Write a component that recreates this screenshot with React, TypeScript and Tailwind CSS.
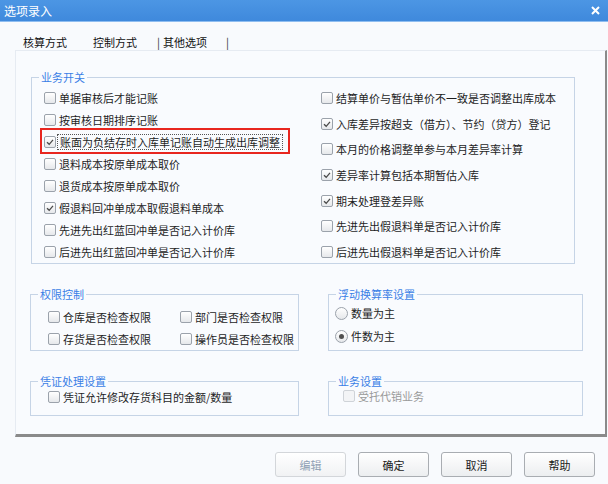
import React from 'react';

const leftItems: [string, boolean][] = [
    ['单据审核后才能记账', false],
    ['按审核日期排序记账', false],
    ['账面为负结存时入库单记账自动生成出库调整', true],
    ['退料成本按原单成本取价', false],
    ['退货成本按原单成本取价', false],
    ['假退料回冲单成本取假退料单成本', true],
    ['先进先出红蓝回冲单是否记入计价库', false],
    ['后进先出红蓝回冲单是否记入计价库', false],
];

const rightItems: [string, boolean][] = [
    ['结算单价与暂估单价不一致是否调整出库成本', false],
    ['入库差异按超支（借方）、节约（贷方）登记', true],
    ['本月的价格调整单参与本月差异率计算', false],
    ['差异率计算包括本期暂估入库', true],
    ['期末处理登差异账', true],
    ['先进先出假退料单是否记入计价库', false],
    ['后进先出假退料单是否记入计价库', false],
];

const Box = ({ checked = false, disabled = false }: { checked?: boolean; disabled?: boolean }) => (
    <span
        className={
            disabled
                ? 'w-[12px] h-[12px] shrink-0 rounded-[2px] border border-[#cfd3d8] bg-[#f3f4f6]'
                : 'w-[12px] h-[12px] shrink-0 rounded-[2px] border border-[#9ba2ab] bg-gradient-to-b from-white to-[#e6e8eb] flex items-center justify-center'
        }
    >
        {checked && (
            <svg width="10" height="10" viewBox="0 0 10 10">
                <path d="M2 5.2 L4.2 7.3 L8 2.8" fill="none" stroke="#4a4a4a" strokeWidth="1.3" />
            </svg>
        )}
    </span>
);

const Radio = ({ on = false }: { on?: boolean }) => (
    <span className="w-[13px] h-[13px] shrink-0 rounded-full border border-[#9ba2ab] bg-gradient-to-b from-white to-[#e6e8eb] flex items-center justify-center">
        {on && <span className="w-[5px] h-[5px] rounded-full bg-[#505050]" />}
    </span>
);

const Row = ({ label, checked }: { label: string; checked?: boolean }) => (
    <div className="flex items-center gap-[3px] h-[16px] whitespace-nowrap">
        <Box checked={checked} />
        <span>{label}</span>
    </div>
);

const Legend = ({ children }: { children: React.ReactNode }) => (
    <legend className="ml-[7px] px-[2px] text-[11px] leading-[14px] text-[#3b7fe6]">{children}</legend>
);

const Btn = ({ label, disabled = false }: { label: string; disabled?: boolean }) => (
    <button
        className={
            disabled
                ? 'w-[71px] h-[25px] rounded-[3px] border border-[#d3d6da] bg-gradient-to-b from-white to-[#f1f2f4] text-[#8fa0b4] text-[11px]'
                : 'w-[71px] h-[25px] rounded-[3px] border border-[#a9adb2] bg-gradient-to-b from-white to-[#eceef0] text-[#1a1a1a] text-[11px]'
        }
    >
        {label}
    </button>
);

export default function App() {
    return (
        <div className="w-[608px] h-[484px] bg-[#f8fafd] text-[11px] leading-[16px] text-[#1e1e1e] font-['Noto_Sans_CJK_SC',sans-serif] flex flex-col overflow-hidden">
            {/* title bar */}
            <div className="h-[22px] shrink-0 bg-gradient-to-b from-[#4c96e4] to-[#3f89dc] border-b border-[#8fbdf0] flex items-center justify-between pl-[4px] pr-[8px]">
                <span className="text-white text-[12px] leading-[14px]">选项录入</span>
                <svg width="9" height="9" viewBox="0 0 9 9">
                    <path d="M1 1 L8 8 M8 1 L1 8" stroke="white" strokeWidth="2" />
                </svg>
            </div>

            {/* tabs */}
            <div className="h-[28px] shrink-0 flex items-center pt-[12px] pl-[23px] text-[11px] text-[#111]">
                <span className="w-[70px]">核算方式</span>
                <span className="w-[64px]">控制方式</span>
                <span className="w-[6px] text-[#333]">|</span>
                <span className="w-[63px]">其他选项</span>
                <span className="text-[#333]">|</span>
            </div>

            {/* panel */}
            <div className="ml-[15px] w-[592px] h-[387px] shrink-0 bg-[#f9fbfe] border-t border-l border-[#e6ebf2] border-r-2 border-r-[#8a8a8a] border-b-[3px] border-b-[#8a8a8a]">
                <fieldset className="ml-[15px] mt-[19px] w-[544px] border border-[#c6d4e6]">
                    <Legend>业务开关</Legend>
                    <div className="flex pl-[12px] pt-[6px] pb-[3px]">
                        <div className="w-[277px] h-[170px] flex flex-col justify-between">
                            {leftItems.map(([label, checked], i) =>
                                i === 2 ? (
                                    <div key={label} className="relative flex items-center gap-[1px] h-[16px] whitespace-nowrap">
                                        <Box checked={checked} />
                                        <span className="px-[2px] border border-dotted border-[#555] leading-[14px]">{label}</span>
                                        <span className="absolute left-[-4px] top-[-6px] w-[250px] h-[26px] border-2 border-[#e8261f]" />
                                    </div>
                                ) : (
                                    <Row key={label} label={label} checked={checked} />
                                )
                            )}
                        </div>
                        <div className="h-[170px] flex flex-col justify-between">
                            {rightItems.map(([label, checked]) => (
                                <Row key={label} label={label} checked={checked} />
                            ))}
                        </div>
                    </div>
                </fieldset>

                <div className="flex mt-[23px]">
                    <div className="ml-[14px] w-[269px] flex flex-col gap-[23px]">
                        <fieldset className="border border-[#c6d4e6]">
                            <Legend>权限控制</Legend>
                            <div className="grid grid-cols-[132px_1fr] gap-y-[6px] pl-[17px] pt-[8px] pb-[3px]">
                                <Row label="仓库是否检查权限" />
                                <Row label="部门是否检查权限" />
                                <Row label="存货是否检查权限" />
                                <Row label="操作员是否检查权限" />
                            </div>
                        </fieldset>
                        <fieldset className="border border-[#c6d4e6]">
                            <Legend>凭证处理设置</Legend>
                            <div className="pl-[17px] pt-[1px] pb-[10px]">
                                <Row label="凭证允许修改存货科目的金额/数量" />
                            </div>
                        </fieldset>
                    </div>

                    <div className="ml-[29px] w-[255px] flex flex-col gap-[23px]">
                        <fieldset className="border border-[#c6d4e6]">
                            <Legend>浮动换算率设置</Legend>
                            <div className="flex flex-col gap-[7px] pl-[6px] pt-[4px] pb-[6px]">
                                <div className="flex items-center gap-[3px] h-[16px]">
                                    <Radio />
                                    <span>数量为主</span>
                                </div>
                                <div className="flex items-center gap-[3px] h-[16px]">
                                    <Radio on />
                                    <span>件数为主</span>
                                </div>
                            </div>
                        </fieldset>
                        <fieldset className="border border-[#c6d4e6]">
                            <Legend>业务设置</Legend>
                            <div className="pl-[14px] pt-0 pb-[11px]">
                                <div className="flex items-center gap-[3px] h-[16px] text-[#9a9a9a]">
                                    <Box disabled />
                                    <span>受托代销业务</span>
                                </div>
                            </div>
                        </fieldset>
                    </div>
                </div>
            </div>

            {/* buttons */}
            <div className="flex justify-end gap-[12px] pr-[13px] mt-[15px]">
                <Btn label="编辑" disabled />
                <Btn label="确定" />
                <Btn label="取消" />
                <Btn label="帮助" />
            </div>
        </div>
    );
}
